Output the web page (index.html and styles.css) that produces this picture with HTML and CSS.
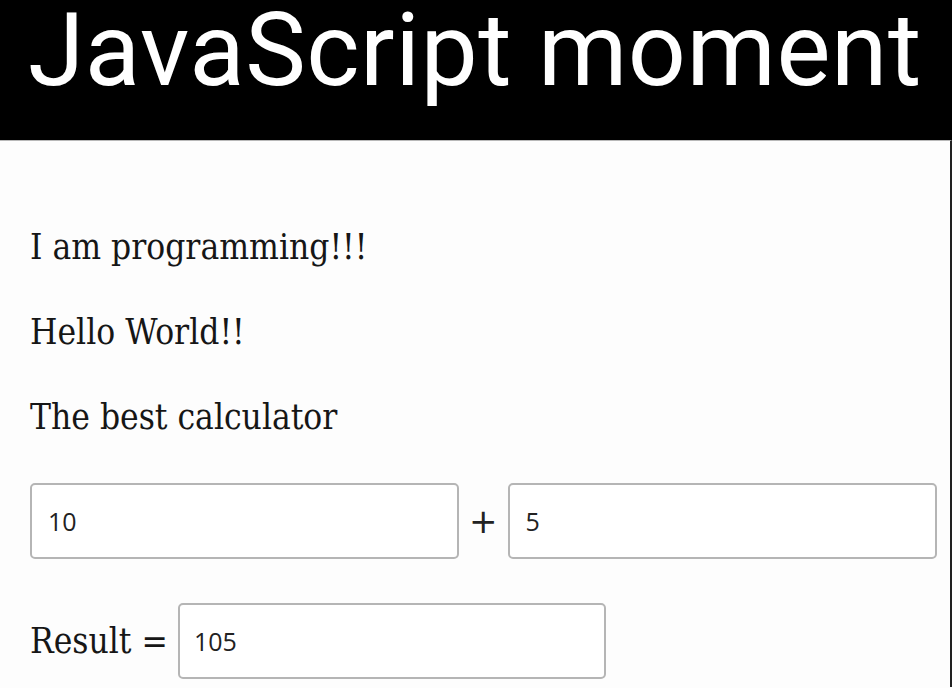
FILE: index.html
```html
<!DOCTYPE html>
<html>
<head>
<meta charset="utf-8">
<link rel="stylesheet" href="styles.css">
</head>
<body>
<header class="banner"><h1 class="title">JavaScript moment</h1></header>
<main class="page">
  <p class="line">I am programming!!!</p>
  <p class="line">Hello World!!</p>
  <p class="line">The best calculator</p>
  <div class="calc-row">
    <div class="field field-wide">10</div>
    <span class="op">+</span>
    <div class="field field-wide">5</div>
  </div>
  <div class="result-row">
    <span class="label">Result =</span>
    <div class="field field-result">105</div>
  </div>
</main>
</body>
</html>
```
FILE: styles.css
```css
html, body {
  margin: 0;
  padding: 0;
  background: #fdfdfd;
  width: 952px;
  height: 688px;
  overflow: hidden;
}
.banner {
  background: #000;
  height: 140px;
  display: flex;
  align-items: flex-start;
}
.title {
  margin: 0;
  padding-left: 28px;
  color: #fff;
  white-space: nowrap;
  font-family: Roboto, sans-serif;
  font-weight: 400;
  font-size: 102px;
  line-height: 100px;
  letter-spacing: 0.5px;
}
.page {
  border-top: 1px solid #b8b8b8;
  border-right: 2px solid #222;
  height: 547px;
  box-sizing: border-box;
  padding: 86px 0 0 30px;
  display: flex;
  flex-direction: column;
  font-family: "DejaVu Serif Condensed", "DejaVu Serif", serif;
  color: #161616;
}
.line {
  margin: 0 0 45px 0;
  font-size: 35px;
  line-height: 40px;
}
.calc-row {
  display: flex;
  align-items: center;
  gap: 10px;
  margin-top: 1px;
}
.field {
  box-sizing: border-box;
  height: 76px;
  border: 2px solid #b5b5b5;
  border-radius: 5px;
  background: #fff;
  font-family: "Open Sans", "Noto Sans", sans-serif;
  font-weight: 500;
  font-size: 25px;
  color: #222;
  display: flex;
  align-items: center;
  padding-left: 16px;
}
.field-wide {
  width: 429px;
}
.op {
  font-family: "DejaVu Sans", sans-serif;
  font-size: 34px;
  color: #222;
}
.result-row {
  display: flex;
  align-items: center;
  gap: 10px;
  margin-top: 44px;
}
.label {
  font-size: 35px;
}
.field-result {
  width: 428px;
  padding-left: 14px;
}
```
